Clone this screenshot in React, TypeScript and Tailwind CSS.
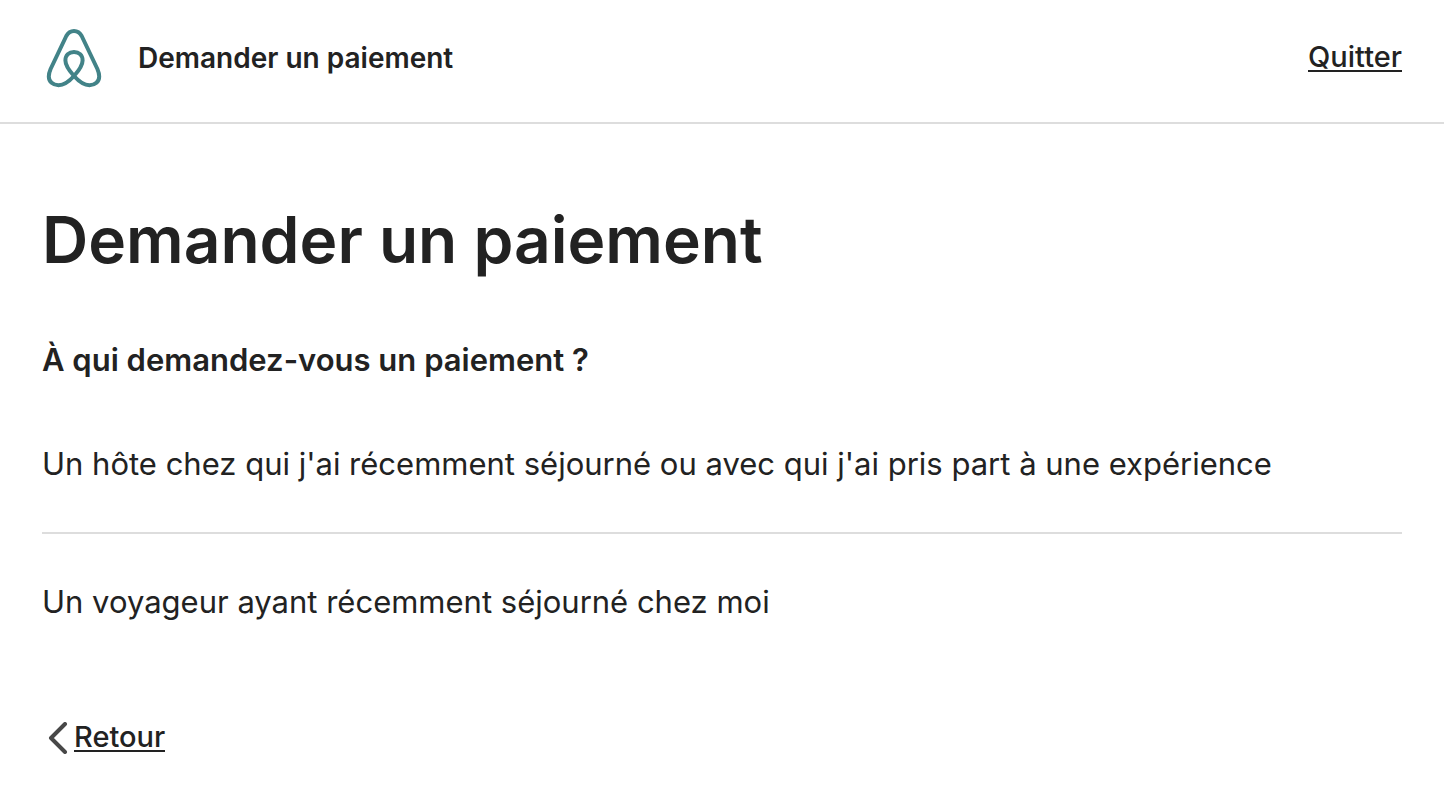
import type { ReactNode } from "react";

const options = [
  "Un hôte chez qui j'ai récemment séjourné ou avec qui j'ai pris part à une expérience",
  "Un voyageur ayant récemment séjourné chez moi",
];

function Logo() {
  return (
    <svg
      viewBox="42 26 64 64"
      fill="none"
      stroke="#428388"
      strokeWidth={4}
      strokeLinejoin="round"
      className="w-16 h-16"
      aria-hidden="true"
    >
      <path
        d="M74 31C70.5 31 68 32.8 66.3 36L50.6 69C49.4 71.8 48.8 74 48.8 76.5
           C48.8 81.7 53 85.2 58.5 85.2C64.5 85.2 70 80.5 74 76
           C78.5 71 82.6 65.5 82.6 60.5C82.6 55.3 79 52 74 52
           C69 52 65.4 55.3 65.4 60.5C65.4 65.5 69.5 71 74 76
           C78 80.5 83.5 85.2 89.5 85.2C95 85.2 99.2 81.7 99.2 76.5
           C99.2 74 98.6 71.8 97.4 69L81.7 36C80 32.8 77.5 31 74 31Z"
      />
    </svg>
  );
}

function TextLink({ children }: { children: ReactNode }) {
  return (
    <a
      href="#"
      className="text-[29px] leading-[26px] font-medium border-b-2 border-[#222222]"
    >
      {children}
    </a>
  );
}

export default function App() {
  return (
    <div className="min-h-screen bg-white text-[#222222] font-['Inter',sans-serif]">
      <header className="flex items-center justify-between px-[42px] pt-[26px] pb-8 border-b-2 border-[#dddddd]">
        <div className="flex items-center gap-8">
          <Logo />
          <span className="text-[28px] leading-9 font-semibold">
            Demander un paiement
          </span>
        </div>
        <TextLink>Quitter</TextLink>
      </header>

      <main className="px-[42px] pt-20">
        <h1 className="text-[64px] leading-[72px] font-semibold">
          Demander un paiement
        </h1>
        <h2 className="mt-16 text-[31px] leading-10 font-semibold">
          À qui demandez-vous un paiement ?
        </h2>

        <ul className="mt-4 divide-y-2 divide-[#dddddd]">
          {options.map((option) => (
            <li key={option}>
              <button
                type="button"
                className="w-full py-12 text-left text-[31px] leading-10"
              >
                {option}
              </button>
            </li>
          ))}
        </ul>

        <div className="mt-[52px] flex items-center">
          <svg
            viewBox="0 0 32 32"
            fill="none"
            stroke="#484848"
            strokeWidth={4}
            strokeLinecap="round"
            strokeLinejoin="round"
            className="w-8 h-8"
            aria-hidden="true"
          >
            <path d="M23 2L9 16L23 30" />
          </svg>
          <TextLink>Retour</TextLink>
        </div>
      </main>
    </div>
  );
}
